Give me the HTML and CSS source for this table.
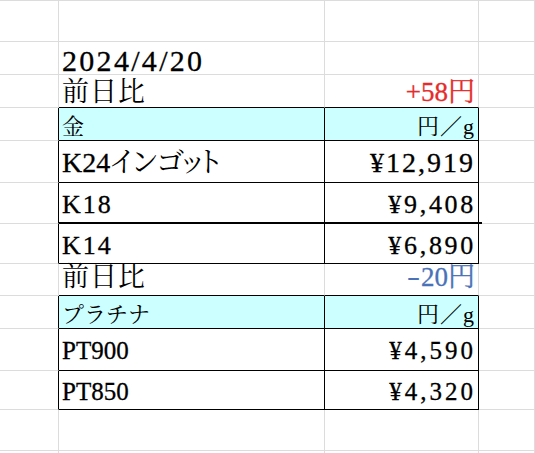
FILE: index.html
```html
<!DOCTYPE html>
<html lang="ja">
<head>
<meta charset="utf-8">
<link rel="stylesheet" href="styles.css">
</head>
<body>
<div class="sheet">
  <div class="row r-top"><div class="c"></div><div class="c"></div><div class="c"></div><div class="c"></div></div>
  <div class="row r-date"><div class="c"></div><div class="c txt">2024/4/20</div><div class="c"></div><div class="c"></div></div>
  <div class="row r-diff"><div class="c"></div><div class="c bb txt jp">前日比</div><div class="c bb r plus">+58円</div><div class="c"></div></div>
  <div class="row r-head"><div class="c br"></div><div class="c br bb hd txt jp">金</div><div class="c br bb hd r unit">円／g</div><div class="c"></div></div>
  <div class="row r-big"><div class="c br"></div><div class="c br bb txt">K24<span class="kana">インゴット</span></div><div class="c br bb r price">¥12,919</div><div class="c"></div></div>
  <div class="row r-mid"><div class="c br"></div><div class="c br bb2 txt">K18</div><div class="c br bb2 r price thick">¥9,408</div><div class="c"></div></div>
  <div class="row r-mid2"><div class="c br"></div><div class="c br bb txt">K14</div><div class="c br bb r price">¥6,890</div><div class="c"></div></div>
  <div class="row r-diff2"><div class="c"></div><div class="c bb txt jp">前日比</div><div class="c bb r minus"><span class="dash">-</span>20円</div><div class="c"></div></div>
  <div class="row r-head"><div class="c br"></div><div class="c br bb hd txt jp">プラチナ</div><div class="c br bb hd r unit">円／g</div><div class="c"></div></div>
  <div class="row r-pt1"><div class="c br"></div><div class="c br bb txt">PT900</div><div class="c br bb r price">¥4,590</div><div class="c"></div></div>
  <div class="row r-pt2"><div class="c br"></div><div class="c br bb txt">PT850</div><div class="c br bb r price">¥4,320</div><div class="c"></div></div>
  <div class="row r-empty"><div class="c"></div><div class="c"></div><div class="c"></div><div class="c"></div></div>
  <div class="row r-empty"><div class="c"></div><div class="c"></div><div class="c"></div><div class="c"></div></div>
</div>
</body>
</html>
```
FILE: styles.css
```css
html, body {
  margin: 0;
  padding: 0;
  background: #ffffff;
}
.sheet {
  width: 535px;
  height: 453px;
  overflow: hidden;
  border-top: 1px solid #dcdcdc;
  display: grid;
  grid-template-columns: 59px 266px 154px 1fr;
  grid-template-rows: 41px 33px 33px 33px 42px 41px 40px 32px 33px 42px 39px 41px 41px;
  font-family: "Liberation Serif", "Noto Serif CJK JP", "Noto Sans CJK JP", serif;
  color: #000;
  -webkit-text-stroke: 0.3px currentColor;
}
.row { display: contents; }
.c {
  box-sizing: border-box;
  border-right: 1px solid #dcdcdc;
  border-bottom: 1px solid #dcdcdc;
  display: flex;
  align-items: flex-end;
  line-height: 0.8;
  white-space: nowrap;
  padding-left: 3px;
}
.c.r { justify-content: flex-end; padding-left: 0; padding-right: 3px; }
.c.br { border-right-color: #000; }
.c.bb { border-bottom-color: #000; }
.c.bb2 { border-bottom: 2px solid #000; }
.c.hd { background: #ccffff; }
.jp { -webkit-text-stroke: 0; }

.thick { position: relative; }
.thick::after {
  content: "";
  position: absolute;
  right: -4px;
  bottom: -2px;
  width: 4px;
  height: 2px;
  background: #000;
}

.r-date .txt { font-size: 30px; letter-spacing: 2.3px; padding-bottom: 1px; }
.r-diff .c, .r-diff2 .c { font-size: 27px; }
.r-diff .jp, .r-diff2 .jp { letter-spacing: 1px; }
.r-diff .txt, .r-diff .r { padding-bottom: 3px; }
.r-diff2 .txt, .r-diff2 .r { padding-bottom: 6px; }
.plus { color: #e52b2b; }
.minus { color: #4a72b8; }
.dash { display: inline-block; transform: scaleX(1.5) translateY(-1px); margin-right: 3px; -webkit-text-stroke: 0; }

.r-head .c { font-size: 22px; padding-bottom: 4px; -webkit-text-stroke: 0; }
.unit { letter-spacing: 1px; }

.r-big .c { font-size: 28px; padding-bottom: 8px; }
.kana { font-feature-settings: "palt" 1; -webkit-text-stroke: 0; }
.r-big .price { letter-spacing: 2px; }

.r-mid .c, .r-mid2 .c { font-size: 26px; padding-bottom: 6px; }
.r-mid .txt, .r-mid2 .txt { letter-spacing: 2px; }
.r-mid .price, .r-mid2 .price { letter-spacing: 2.7px; padding-right: 2px; }

.r-pt1 .c, .r-pt2 .c { font-size: 25px; }
.r-pt1 .c { padding-bottom: 9px; }
.r-pt2 .c { padding-bottom: 7px; }
.r-pt1 .price, .r-pt2 .price { letter-spacing: 3px; padding-right: 2px; }
```
